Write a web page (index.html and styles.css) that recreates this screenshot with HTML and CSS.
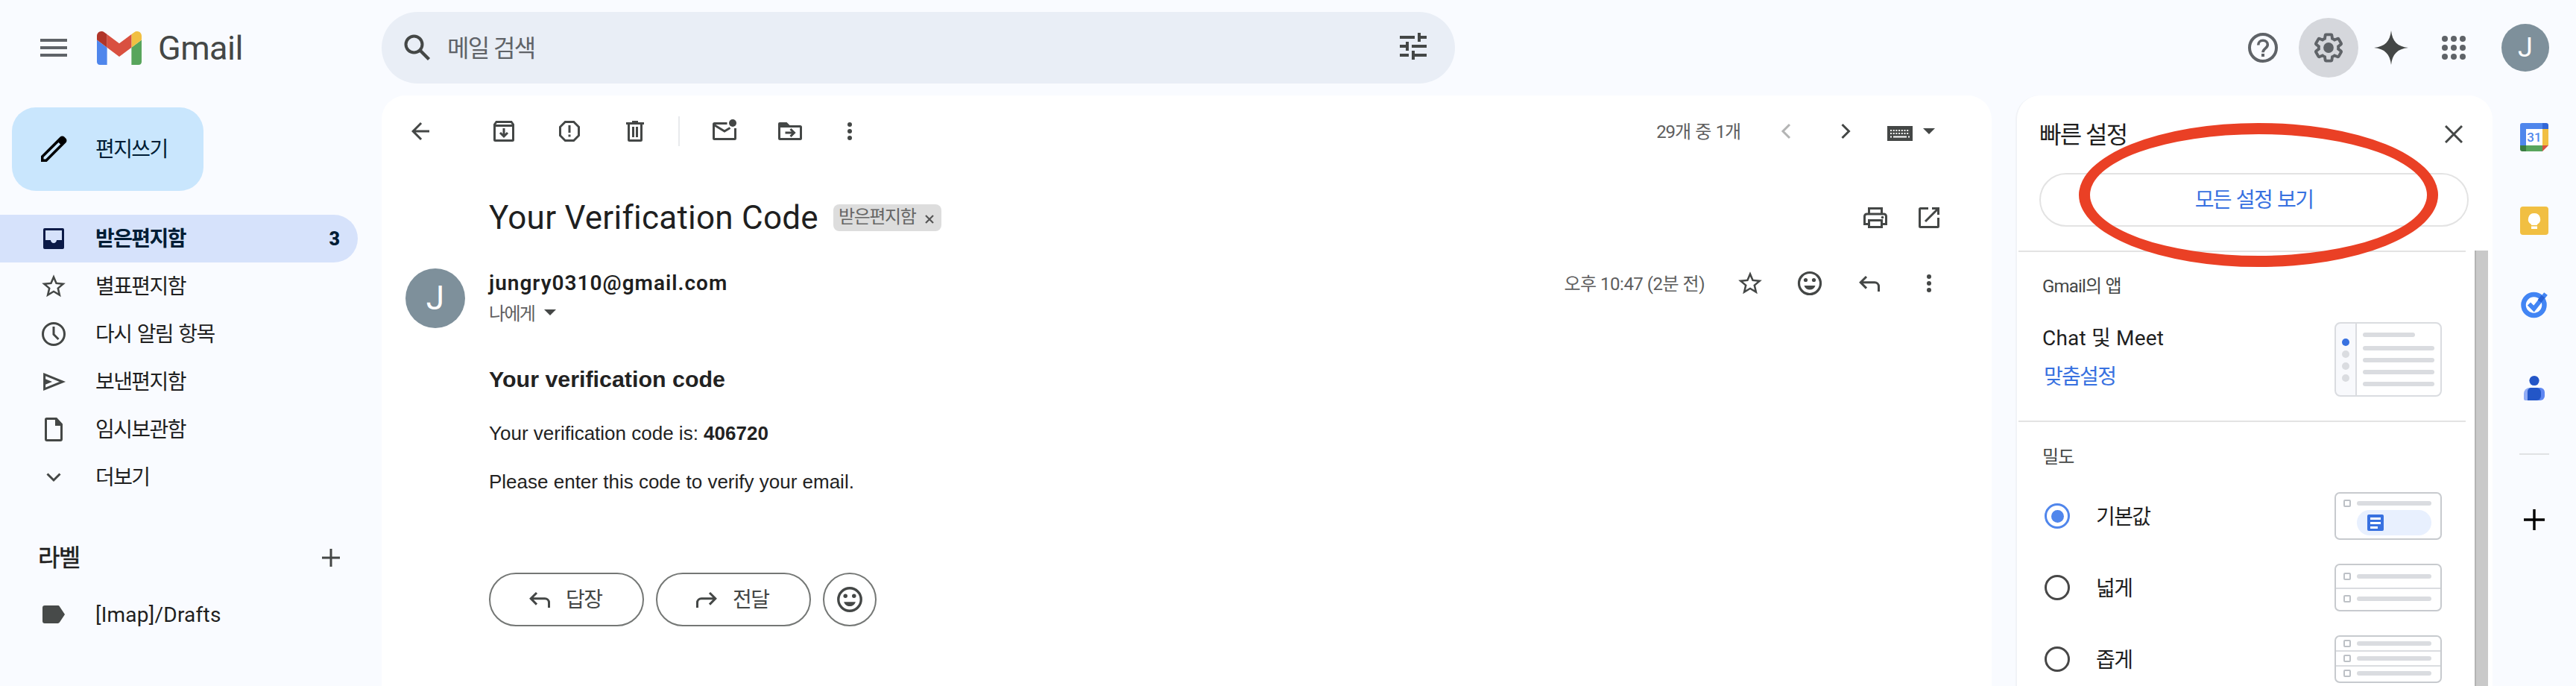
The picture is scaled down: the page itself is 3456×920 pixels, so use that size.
FILE: index.html
```html
<!DOCTYPE html>
<html lang="ko">
<head>
  <meta charset="UTF-8">
  <meta name="viewport" content="width=device-width, initial-scale=1.0">
  <title>Gmail</title>
  <link rel="stylesheet" href="styles.css">
</head>
<body>
  <svg class="sprite" aria-hidden="true">
    <symbol id="dots" viewBox="0 0 40 40"><g fill="currentColor"><circle cx="20" cy="11" r="3"/><circle cx="20" cy="20" r="3"/><circle cx="20" cy="29" r="3"/></g></symbol>
    <symbol id="star" viewBox="0 0 24 24"><path fill="currentColor" d="M22 9.24l-7.19-.62L12 2 9.19 8.63 2 9.24l5.46 4.73L5.82 21 12 17.27 18.18 21l-1.63-7.03L22 9.24zM12 15.4l-3.76 2.27 1-4.28-3.32-2.88 4.38-.38L12 6.1l1.71 4.04 4.38.38-3.32 2.88 1 4.28L12 15.4z"/></symbol>
    <symbol id="smile" viewBox="0 0 40 40"><circle cx="20" cy="20" r="14.5" fill="none" stroke="currentColor" stroke-width="3.2"/><g fill="currentColor"><circle cx="14.5" cy="15.5" r="2.6"/><circle cx="25.5" cy="15.5" r="2.6"/><path d="M12.5 23h15c-1.2 3.600-4 5.600-7.500 5.600s-6.300-2-7.500-5.600z"/></g></symbol>
    <symbol id="reply" viewBox="0 0 40 40"><path class="line" d="M16 11l-7.800 7.800 7.800 7.800M8.500 18.800H27a5.500 5.500 0 0 1 5.500 5.500V31"/></symbol>
  </svg>

  <header class="header">
    <div class="brand">
      <svg class="menu" viewBox="0 0 36 24"><path fill="#5f6368" d="M0 0h36v4H0zM0 10h36v4H0zM0 20h36v4H0z"/></svg>
      <svg class="logo" viewBox="52 42 88 66">
        <path fill="#4f86ec" d="M58 108h14V74L52 59v43c0 3.320 2.690 6 6 6"/>
        <path fill="#58a55c" d="M120 108h14c3.320 0 6-2.690 6-6V59l-20 15"/>
        <path fill="#f1bf42" d="M120 48v26l20-15v-8c0-7.420-8.470-11.650-14.400-7.200"/>
        <path fill="#d95040" d="M72 74V48l24 18 24-18v26L96 92"/>
        <path fill="#b13529" d="M52 51v8l20 15V48l-5.600-4.200c-5.940-4.450-14.400-.22-14.400 7.200"/>
      </svg>
      <span class="brand-name">Gmail</span>
    </div>
    <div class="search">
      <svg class="icon-search" viewBox="0 0 36 36"><circle cx="13.500" cy="13.500" r="11" fill="none" stroke="currentColor" stroke-width="4"/><path d="M21.500 21.500L33.500 33.500" stroke="currentColor" stroke-width="4.400"/></svg>
      <span>메일 검색</span>
      <svg class="icon-tune" viewBox="0 0 36 36"><path fill="currentColor" d="M0 4h20v4H0zM24 0h4v4h8v4h-8v4h-4zM0 16h8v-4h4v12H8v-4H0zM16 16h20v4H16zM0 28h12v4H0zM16 24h4v4h16v4H20v4h-4z"/></svg>
    </div>
    <div class="header-actions">
      <div class="round"><svg width="40" height="40" viewBox="0 0 40 40"><circle cx="20" cy="20" r="18" fill="none" stroke="#5f6368" stroke-width="4"/><path d="M13.700 16.500c0-3.700 2.700-6.200 6.300-6.200s6.300 2.400 6.300 5.700c0 4.800-6.300 4.900-6.300 10.200" fill="none" stroke="#5f6368" stroke-width="3.600"/><path fill="#5f6368" d="M18 28h4v4h-4z"/></svg></div>
      <div class="round round-on"><svg width="46" height="46" viewBox="0 0 24 24"><path fill="none" stroke="#5f6368" stroke-width="2.200" transform="translate(1 1) scale(.917)" d="M19.430 12.980c.04-.32.07-.64.07-.98 0-.34-.03-.66-.07-.98l2.110-1.650c.19-.15.24-.42.12-.64l-2-3.460c-.09-.16-.26-.25-.44-.25-.06 0-.12.01-.17.03l-2.490 1c-.52-.4-1.080-.73-1.690-.98l-.38-2.650C14.460 2.180 14.250 2 14 2h-4c-.25 0-.46.18-.49.42l-.38 2.650c-.61.25-1.170.59-1.690.98l-2.490-1c-.06-.02-.12-.03-.18-.03-.17 0-.34.09-.43.25l-2 3.460c-.13.22-.07.49.12.64l2.110 1.650c-.04.32-.07.65-.07.98 0 .33.03.66.07.98l-2.110 1.650c-.19.15-.24.42-.12.64l2 3.460c.09.16.26.25.44.25.06 0 .12-.01.17-.03l2.490-1c.52.4 1.080.73 1.690.98l.38 2.650c.03.24.24.42.49.42h4c.25 0 .46-.18.49-.42l.38-2.650c.61-.25 1.170-.59 1.690-.98l2.490 1c.06.02.12.03.18.03.17 0 .34-.09.43-.25l2-3.460c.12-.22.07-.49-.12-.64l-2.110-1.650z"/><circle cx="12" cy="12" r="3.600" fill="#5f6368"/></svg></div>
      <div class="round"><svg width="46" height="46" viewBox="0 0 46 46"><path fill="#444746" d="M23 0c1.500 14.500 8.500 21.500 23 23-14.500 1.500-21.500 8.500-23 23-1.500-14.500-8.500-21.500-23-23 14.500-1.500 21.500-8.500 23-23z"/></svg></div>
      <div class="round"><svg width="32" height="32" viewBox="0 0 32 32"><g fill="#5f6368"><circle cx="4" cy="4" r="4"/><circle cx="16" cy="4" r="4"/><circle cx="28" cy="4" r="4"/><circle cx="4" cy="16" r="4"/><circle cx="16" cy="16" r="4"/><circle cx="28" cy="16" r="4"/><circle cx="4" cy="28" r="4"/><circle cx="16" cy="28" r="4"/><circle cx="28" cy="28" r="4"/></g></svg></div>
      <div class="avatar avatar-small">J</div>
    </div>
  </header>

  <div class="content">
    <nav class="sidebar">
      <div class="compose">
        <svg width="38" height="38" viewBox="0 0 38 38"><path d="M2 28.300L27.500 2.800a4.200 4.200 0 0 1 6 0l1.700 1.700a4.200 4.200 0 0 1 0 6L9.700 36H2z" fill="#000"/><path d="M5.500 32.500v-2.800L25.500 10l2.600 2.600L8.200 32.500z" fill="#c9e6fd"/></svg>
        <span>편지쓰기</span>
      </div>
      <div class="nav-item active">
        <svg viewBox="0 0 40 40"><path fill="#0b1a47" fill-rule="evenodd" d="M8 6h24a2 2 0 0 1 2 2v24a2 2 0 0 1-2 2H8a2 2 0 0 1-2-2V8a2 2 0 0 1 2-2zM9 9v13h7c0 2.200 1.800 4 4 4s4-1.800 4-4h7V9z"/></svg>
        <span>받은편지함</span><b class="count">3</b>
      </div>
      <div class="nav-item"><svg class="nav-star"><use href="#star"/></svg><span>별표편지함</span></div>
      <div class="nav-item"><svg viewBox="0 0 40 40"><circle class="line" cx="20" cy="20" r="14.500"/><path class="line" d="M20 10v10.500l6.500 6.500"/></svg><span>다시 알림 항목</span></div>
      <div class="nav-item"><svg viewBox="0 0 40 40"><path class="line" d="M7.600 10.200L32 20 7.600 29.800z"/><path fill="#444746" d="M7 15.500L18 20 7 24.500z"/></svg><span>보낸편지함</span></div>
      <div class="nav-item"><svg viewBox="0 0 40 40"><path class="line" d="M10.500 5.500h13l7 7.500v20a1.500 1.500 0 0 1-1.500 1.500H11a1.500 1.500 0 0 1-1.500-1.500V6.500a1 1 0 0 1 1-1z"/><path fill="#444746" d="M22 5v10h10l-8-10z"/></svg><span>임시보관함</span></div>
      <div class="nav-item"><svg viewBox="0 0 40 40"><path class="line" d="M11.500 15.500l8.500 8.500 8.500-8.500"/></svg><span>더보기</span></div>
      <div class="labels-head"><span>라벨</span><svg width="24" height="24" viewBox="0 0 24 24"><path class="line" d="M12 0v24M0 12h24"/></svg></div>
      <div class="nav-item label-row"><svg viewBox="0 0 40 40"><path fill="#474a49" d="M8 8h17.500c1 0 2 .5 2.500 1.400L35 20l-7 10.600c-.5.900-1.500 1.400-2.500 1.400H8a3 3 0 0 1-3-3V11a3 3 0 0 1 3-3z"/></svg><span>[Imap]/Drafts</span></div>
    </nav>

    <main class="mail">
      <div class="toolbar">
        <div class="tool back"><svg class="icon36" viewBox="0 0 24 24"><path fill="currentColor" d="M20 11H7.830l5.590-5.590L12 4l-8 8 8 8 1.410-1.410L7.830 13H20v-2z"/></svg></div>
        <div class="tool"><svg viewBox="0 0 40 40"><path class="line" d="M10 7.500h20l2.500 3.500v20.500a1 1 0 0 1-1 1h-23a1 1 0 0 1-1-1V11zM7.500 12.500h25M20 16v10M15 22l5 5 5-5"/></svg></div>
        <div class="tool"><svg viewBox="0 0 40 40"><path class="line" d="M14.300 7.500h11.400l6.800 6.800v11.400l-6.800 6.800H14.300l-6.800-6.800V14.300zM20 12v10M20 24.500v3"/></svg></div>
        <div class="tool"><svg viewBox="0 0 40 40"><path class="line" d="M8 9.500h24M16 7.500h8M11.500 10v21.500a1 1 0 0 0 1 1h15a1 1 0 0 0 1-1V10M17.500 14v14M22.500 14v14"/></svg></div>
        <div class="tool-divider"></div>
        <div class="tool"><svg viewBox="0 0 40 40"><path class="line" d="M23.500 9.500h-17a1 1 0 0 0-1 1v19a1 1 0 0 0 1 1h27a1 1 0 0 0 1-1V16M6 11.500l14 8.500 7.500-4.500"/><circle cx="31" cy="9" r="5" fill="currentColor"/></svg></div>
        <div class="tool"><svg viewBox="0 0 40 40"><path class="line" d="M5.500 11v18.500a1 1 0 0 0 1 1h27a1 1 0 0 0 1-1v-15a1 1 0 0 0-1-1H6M13.500 22h11M20.500 17l5 5-5 5"/><path fill="currentColor" d="M4 14v-4a2 2 0 0 1 2-2h9.500l4 4v2z"/></svg></div>
        <div class="tool more"><svg><use href="#dots"/></svg></div>
        <span class="pager">29개 중 1개</span>
        <div class="tool page"><svg class="dim" viewBox="0 0 40 40"><path class="line" d="M25 11l-9 9 9 9"/></svg></div>
        <div class="tool page"><svg viewBox="0 0 40 40"><path class="line" d="M15.500 11l9 9-9 9"/></svg></div>
        <svg class="keyboard" viewBox="0 0 34 20"><path fill="#444746" d="M0 0h34v20H0z"/><path stroke="#fff" stroke-width="2" stroke-dasharray="2 1.700" d="M4 6h26M4 10h26"/><path stroke="#fff" stroke-width="2" d="M4 14.500h2M8 14.500h18M28 14.500h2"/></svg>
        <i class="caret"></i>
      </div>

      <div class="subject">
        <h1>Your Verification Code</h1>
        <div class="badge"><span>받은편지함</span><svg width="12" height="12" viewBox="0 0 12 12"><path d="M1 1l10 10M11 1L1 11" stroke="#555" stroke-width="2.200"/></svg></div>
        <div class="subject-actions">
          <svg viewBox="0 0 40 40"><path class="line" d="M11.500 15V7.500h17V15M11.500 28.500h-6V18a3 3 0 0 1 3-3h23a3 3 0 0 1 3 3v10.500h-6M11.500 23.500h17v9h-17z"/><circle cx="29.500" cy="19.500" r="1.800" fill="currentColor"/></svg>
          <svg viewBox="0 0 40 40"><path class="line" d="M19 7.500H8.500a1 1 0 0 0-1 1v23a1 1 0 0 0 1 1h23a1 1 0 0 0 1-1V20M24 7.500h8.500V16M32 8L15 25"/></svg>
        </div>
      </div>

      <div class="sender">
        <div class="avatar">J</div>
        <div class="sender-info">
          <div class="sender-mail">jungry0310@gmail.com</div>
          <div class="sender-to">나에게<i class="caret"></i></div>
        </div>
        <div class="sender-actions">
          <span class="date">오후 10:47 (2분 전)</span>
          <div class="tool"><svg class="icon38"><use href="#star"/></svg></div>
          <div class="tool"><svg><use href="#smile"/></svg></div>
          <div class="tool"><svg><use href="#reply"/></svg></div>
          <div class="tool"><svg><use href="#dots"/></svg></div>
        </div>
      </div>

      <div class="message">
        <h3>Your verification code</h3>
        <p>Your verification code is: <b>406720</b></p>
        <p>Please enter this code to verify your email.</p>
      </div>

      <div class="reply-row">
        <div class="pill"><svg><use href="#reply"/></svg><span>답장</span></div>
        <div class="pill"><svg class="flip"><use href="#reply"/></svg><span>전달</span></div>
        <div class="pill pill-round"><svg class="icon42"><use href="#smile"/></svg></div>
      </div>
    </main>

    <aside class="settings">
      <div class="settings-top">
        <div class="settings-title"><span>빠른 설정</span><svg width="24" height="24" viewBox="0 0 24 24"><path class="line" d="M1 1l22 22M23 1L1 23"/></svg></div>
        <div class="all-settings">모든 설정 보기</div>
        <div class="marker"></div>
      </div>
      <div class="settings-scroll">
        <section class="apps">
          <h4>Gmail의 앱</h4>
          <div class="apps-row">
            <div>
              <div class="apps-name">Chat 및 Meet</div>
              <div class="apps-link">맞춤설정</div>
            </div>
            <svg class="apps-preview" width="144" height="100" viewBox="0 0 144 100">
              <path fill="#f8f9fc" d="M6 1h23v98H6a5 5 0 0 1-5-5V6a5 5 0 0 1 5-5z"/>
              <rect x="1" y="1" width="142" height="98" rx="7" fill="none" stroke="#dadce0" stroke-width="2"/>
              <path stroke="#dadce0" stroke-width="2" d="M29 1v98"/>
              <circle cx="15" cy="27" r="5" fill="#3871e0"/>
              <g fill="#dadce0"><circle cx="15" cy="43" r="5"/><circle cx="15" cy="59" r="5"/><circle cx="15" cy="75" r="5"/>
              <rect x="38" y="14" width="70" height="6" rx="3"/><rect x="38" y="32" width="96" height="6" rx="3"/><rect x="38" y="48" width="96" height="6" rx="3"/><rect x="38" y="64" width="96" height="6" rx="3"/><rect x="38" y="80" width="96" height="6" rx="3"/></g>
            </svg>
          </div>
        </section>
        <section class="density">
          <h4>밀도</h4>
          <div class="option">
            <i class="radio checked"></i><span>기본값</span>
            <svg width="144" height="64" viewBox="0 0 144 64">
              <rect class="frame" x="1" y="1" width="142" height="62" rx="6"/>
              <rect class="box" x="13" y="11" width="8" height="8" rx="1"/><rect class="bar" x="30" y="12" width="100" height="6" rx="3"/>
              <rect x="30" y="24" width="100" height="34" rx="17" fill="#e8f0fe"/>
              <rect x="44" y="30" width="22" height="22" rx="2" fill="#3871e0"/><path stroke="#fff" stroke-width="3" d="M48 35.500h14M48 41.500h14M48 47.500h10"/>
            </svg>
          </div>
          <div class="option">
            <i class="radio"></i><span>넓게</span>
            <svg width="144" height="64" viewBox="0 0 144 64">
              <path stroke="#dadce0" stroke-width="2" d="M1 33h142"/><rect class="frame" x="1" y="1" width="142" height="62" rx="6"/>
              <rect class="box" x="13" y="13" width="8" height="8" rx="1"/><rect class="bar" x="30" y="14" width="100" height="6" rx="3"/>
              <rect class="box" x="13" y="43" width="8" height="8" rx="1"/><rect class="bar" x="30" y="44" width="100" height="6" rx="3"/>
            </svg>
          </div>
          <div class="option">
            <i class="radio"></i><span>좁게</span>
            <svg width="144" height="64" viewBox="0 0 144 64">
              <path stroke="#dadce0" stroke-width="2" d="M1 21h142M1 41h142"/><rect class="frame" x="1" y="1" width="142" height="62" rx="6"/>
              <rect class="box" x="13" y="7" width="8" height="8" rx="1"/><rect class="bar" x="30" y="8" width="100" height="6" rx="3"/>
              <rect class="box" x="13" y="27" width="8" height="8" rx="1"/><rect class="bar" x="30" y="28" width="100" height="6" rx="3"/>
              <rect class="box" x="13" y="47" width="8" height="8" rx="1"/><rect class="bar" x="30" y="48" width="100" height="6" rx="3"/>
            </svg>
          </div>
        </section>
        <div class="scrollbar"></div>
      </div>
    </aside>

    <aside class="side-apps">
      <svg width="38" height="38" viewBox="0 0 38 38">
        <path fill="#4f86ec" d="M3 0h27v8H8v22H0V3a3 3 0 0 1 3-3z"/><path fill="#3367d6" d="M30 0h5a3 3 0 0 1 3 3v5h-8z"/>
        <path fill="#f1bf42" d="M30 8h8v22h-8z"/><path fill="#58a55c" d="M8 30h22v8H8z"/><path fill="#3a7d42" d="M0 30h8v8H3a3 3 0 0 1-3-3z"/><path fill="#d95040" d="M30 30h8l-8 8z"/>
        <path fill="#fff" d="M8 8h22v22H8z"/><text class="cal-day" x="19" y="25" text-anchor="middle">31</text>
      </svg>
      <svg width="38" height="38" viewBox="0 0 38 38">
        <rect width="38" height="38" rx="4" fill="#f1bf42"/><path fill="#fff" d="M19 9a8 8 0 0 1 4 15v1h-8v-1a8 8 0 0 1 4-15zM15 26.500h8V30h-8z"/>
      </svg>
      <svg width="38" height="38" viewBox="0 0 38 38">
        <circle cx="18.500" cy="20" r="14" fill="#fff" stroke="#4285f4" stroke-width="6.500"/>
        <path d="M12 18.500l6.500 6.500L34.500 5" fill="none" stroke="#4285f4" stroke-width="6"/><path d="M26 15l5-6.500" stroke="#2a63d6" stroke-width="6"/>
      </svg>
      <svg width="38" height="38" viewBox="0 0 38 38">
        <circle cx="19" cy="9.500" r="6.600" fill="#2356c7"/><path fill="#8fabf5" d="M13 19h12v17H7a2 2 0 0 1-2-2v-7a8 8 0 0 1 8-8z"/>
        <path fill="#5e87f2" d="M19 19h8a6 6 0 0 1 6 6v5a6 6 0 0 1-6 6h-8z"/><path fill="#2356c7" d="M15 19h7a6 6 0 0 1 6 6v5a6 6 0 0 1-6 6H10V24a5 5 0 0 1 5-5z"/>
      </svg>
      <div class="side-divider"></div>
      <svg class="side-plus" width="28" height="28" viewBox="0 0 28 28"><path stroke="#000" stroke-width="3.400" d="M14 0v28M0 14h28"/></svg>
    </aside>
  </div>
</body>
</html>
```

FILE: styles.css
```css
* {
  margin: 0;
  padding: 0;
  box-sizing: border-box;
}

body {
  width: 3456px;
  height: 920px;
  overflow: hidden;
  background: #f9fbff;
  color: #1f1f1f;
  font-family: Roboto, "Noto Sans CJK KR", sans-serif;
  font-size: 28px;
  white-space: nowrap;
}

svg {
  display: block;
  flex: none;
}

.sprite {
  position: absolute;
  width: 0;
  height: 0;
}

.line {
  fill: none;
  stroke: #444746;
  stroke-width: 3;
}

/* Header */
.header {
  display: flex;
  height: 128px;
}

.brand {
  width: 512px;
  height: 128px;
  padding-left: 54px;
  display: flex;
  align-items: center;
}

.menu {
  width: 36px;
  height: 24px;
  margin-right: 40px;
}

.logo {
  width: 60px;
  height: 45px;
  margin-right: 22px;
}

.brand-name {
  font-size: 45px;
  letter-spacing: -0.5px;
  color: #444746;
}

.search {
  width: 1440px;
  height: 96px;
  margin-top: 16px;
  padding: 0 38px 0 30px;
  border-radius: 48px;
  background: #e9eef6;
  color: #444746;
  display: flex;
  align-items: center;
}

.search span {
  flex: 1;
  margin: -5px 0 0 22px;
  font-size: 32px;
  letter-spacing: -1.6px;
  color: #5f6368;
}

.icon-search,
.icon-tune {
  width: 36px;
  height: 36px;
}

.icon-tune {
  margin-top: -4px;
}

.header-actions {
  flex: 1;
  display: flex;
  align-items: center;
  justify-content: flex-end;
  padding-right: 36px;
}

.round {
  width: 80px;
  height: 80px;
  margin-right: 4px;
  border-radius: 50%;
  display: flex;
  align-items: center;
  justify-content: center;
}

.round-on {
  background: #d5d7dc;
}

.round:nth-child(1) {
  margin-right: 8px;
}

.avatar {
  width: 80px;
  height: 80px;
  border-radius: 50%;
  background: #7e909b;
  color: #fff;
  font-size: 44px;
  display: flex;
  align-items: center;
  justify-content: center;
  flex: none;
}

.avatar-small {
  width: 64px;
  height: 64px;
  margin-left: 20px;
  font-size: 36px;
}

/* Columns */
.content {
  display: flex;
  height: 792px;
}

.sidebar {
  width: 512px;
  padding-top: 16px;
}

.compose {
  width: 257px;
  height: 112px;
  margin-left: 16px;
  padding-left: 37px;
  border-radius: 32px;
  background: #c9e6fd;
  color: #001d35;
  display: flex;
  align-items: center;
  letter-spacing: -1.6px;
}

.compose span {
  margin: -5px 0 0 37px;
}

.nav-item {
  width: 480px;
  height: 64px;
  padding: 0 24px 0 52px;
  display: flex;
  align-items: center;
}

.nav-item svg {
  width: 40px;
  height: 40px;
}

.nav-item .nav-star {
  width: 38px;
  height: 38px;
  margin: 0 1px;
  color: #444746;
}

.nav-item span {
  margin: -5px 0 0 36px;
  letter-spacing: -1.6px;
  word-spacing: 2px;
}

.active {
  margin-top: 32px;
  border-radius: 0 32px 32px 0;
  background: #d6e2fb;
  color: #001d35;
  font-weight: 700;
}

.count {
  margin-left: auto;
  font-size: 25px;
}

.labels-head {
  width: 456px;
  height: 72px;
  margin: 40px 0 0 51px;
  padding-right: 51px;
  display: flex;
  align-items: center;
  justify-content: space-between;
  font-size: 32px;
  letter-spacing: -1.8px;
}

.labels-head span {
  margin-top: -6px;
  -webkit-text-stroke: 0.5px #1f1f1f;
}

.label-row {
  margin-top: 8px;
}

.nav-item.label-row span {
  margin-top: 0;
  letter-spacing: 0.25px;
}

.mail {
  width: 2160px;
  border-radius: 32px 32px 0 0;
  background: #fff;
  color: #444746;
}

.toolbar {
  height: 96px;
  padding: 0 76px 0 8px;
  display: flex;
  align-items: center;
}

.tool {
  width: 88px;
  display: flex;
  justify-content: center;
}

.tool svg {
  width: 40px;
  height: 40px;
}

.tool svg.icon36 {
  width: 36px;
  height: 36px;
}

.tool svg.icon38 {
  width: 38px;
  height: 38px;
}

.back {
  margin-right: 24px;
}

.tool-divider {
  width: 2px;
  height: 40px;
  margin: 0 16px 0 14px;
  background: #e8eaed;
}

.toolbar .more {
  width: 72px;
}

.pager {
  margin: -4px 0 0 auto;
  font-size: 24px;
  letter-spacing: -1.1px;
  word-spacing: 1.5px;
  color: #5e5e5e;
}

.toolbar .page {
  width: 80px;
}

.pager + .page {
  margin-left: 21px;
}

.dim {
  opacity: 0.4;
}

.keyboard {
  width: 34px;
  height: 20px;
  margin: 6px 14px 0 16px;
}

.caret {
  display: inline-block;
  border: 8px solid transparent;
  border-top-color: #444746;
  border-bottom: 0;
}

.subject {
  height: 136px;
  padding: 0 64px 0 144px;
  display: flex;
  align-items: center;
}

.subject h1 {
  width: 462px;
  font-size: 44px;
  font-weight: 400;
  letter-spacing: 0.25px;
  color: #1f1f1f;
}

.badge {
  width: 145px;
  height: 36px;
  padding: 0 10px 0 7px;
  border-radius: 8px;
  background: #ddd;
  color: #666;
  font-size: 24px;
  line-height: 34px;
  letter-spacing: -1.4px;
  display: flex;
  align-items: center;
  justify-content: space-between;
}

.badge span {
  margin-top: -2px;
}

.badge svg {
  margin-top: 3px;
}

.subject-actions {
  margin-left: auto;
  display: flex;
  gap: 32px;
}

.subject-actions svg {
  width: 40px;
  height: 40px;
}

.sender {
  height: 80px;
  padding-left: 32px;
  display: flex;
}

.sender-info {
  margin-left: 32px;
}

.sender-mail {
  height: 40px;
  line-height: 40px;
  font-weight: 600;
  letter-spacing: 1px;
  color: #1f1f1f;
}

.sender-to {
  height: 36px;
  display: flex;
  align-items: center;
  gap: 13px;
  font-size: 24px;
  letter-spacing: -1.7px;
  color: #5e5e5e;
}

.sender-to .caret {
  margin-top: 2px;
}

.sender-actions {
  height: 40px;
  margin: 0 44px 0 auto;
  display: flex;
  align-items: center;
}

.sender-actions .tool {
  width: 80px;
}

.date {
  margin: -4px 21px 0 0;
  font-size: 24px;
  letter-spacing: -0.5px;
  color: #5e5e5e;
}

/* Message body */
.message {
  padding: 50px 0 0 144px;
  font-family: "Liberation Sans", sans-serif;
  font-size: 26px;
  color: #222;
}

.message h3 {
  margin-bottom: 37px;
  font-size: 30.4px;
  line-height: 36px;
}

.message p {
  height: 65px;
  line-height: 36px;
}

.reply-row {
  margin: 16px 0 0 144px;
  padding-top: 59px;
  display: flex;
  gap: 16px;
  color: #444746;
}

.pill {
  width: 208px;
  height: 72px;
  border: 2px solid #747775;
  border-radius: 36px;
  display: flex;
  align-items: center;
  padding-left: 46px;
}

.pill svg {
  width: 40px;
  height: 40px;
}

.pill span {
  margin: -5px 0 0 15px;
  letter-spacing: -1.6px;
}

.flip {
  transform: scaleX(-1);
}

.pill-round {
  width: 72px;
  padding: 0;
  justify-content: center;
}

.pill svg.icon42 {
  width: 42px;
  height: 42px;
}

/* Quick settings */
.settings {
  width: 640px;
  margin-left: 32px;
  border-left: 2px solid #f1f3f7;
  border-radius: 32px 32px 0 0;
  background: #fff;
}

.settings-top {
  position: relative;
  height: 208px;
  padding: 26px 32px 0 30px;
}

.settings-title {
  height: 52px;
  padding-right: 8px;
  display: flex;
  align-items: center;
  justify-content: space-between;
  font-size: 32px;
  letter-spacing: -1.6px;
}

.settings-title span {
  margin-top: -5px;
}

.all-settings {
  height: 72px;
  margin-top: 26px;
  border: 2px solid #e3e3e3;
  border-radius: 36px;
  text-align: center;
  line-height: 70px;
  letter-spacing: -1.6px;
  word-spacing: 1.5px;
  color: #3871e0;
}

/* red ring drawn over the button */
.marker {
  position: absolute;
  left: 83px;
  top: 37px;
  width: 482px;
  height: 193px;
  border: 15px solid #ea4025;
  border-radius: 50%;
  z-index: 1;
}

.settings-scroll {
  position: relative;
  height: 584px;
  overflow: hidden;
}

.scrollbar {
  position: absolute;
  top: 0;
  right: 6px;
  width: 18px;
  height: 584px;
  border-left: 2px solid #b3b3b3;
  background: #c9c9c9;
}

.apps,
.density {
  width: 600px;
  margin-left: 2px;
  padding-left: 32px;
  border-top: 2px solid #e3e3e3;
}

.apps {
  height: 228px;
}

.settings h4 {
  height: 92px;
  line-height: 93px;
  font-size: 24px;
  font-weight: 400;
  letter-spacing: -0.8px;
  color: #444746;
}

.apps-row {
  display: flex;
  justify-content: space-between;
  margin-right: 32px;
}

.apps-preview {
  margin-top: 2px;
}

.apps-name {
  height: 50px;
  margin-top: 2px;
  line-height: 43px;
  letter-spacing: 0.2px;
}

.apps-link {
  padding-left: 2px;
  line-height: 48px;
  letter-spacing: -1.7px;
  color: #3871e0;
}

.density h4 {
  height: 94px;
  line-height: 94px;
}

.option {
  height: 64px;
  margin: 0 32px 32px 0;
  padding-left: 3px;
  display: flex;
  align-items: center;
}

.option span {
  flex: 1;
  margin: -3px 0 0 35px;
  letter-spacing: -1.6px;
}

.radio {
  width: 34px;
  height: 34px;
  border: 3px solid #474747;
  border-radius: 50%;
}

.checked {
  border-color: #5086ec;
  padding: 5.5px;
  background: #5086ec content-box;
}

.frame {
  fill: none;
  stroke: #c7cace;
  stroke-width: 2;
}

.box {
  fill: none;
  stroke: #bdc1c6;
  stroke-width: 2;
}

.bar {
  fill: #dadce0;
}

/* Side panel icons */
.side-apps {
  width: 112px;
  padding-top: 37px;
  display: flex;
  flex-direction: column;
  align-items: center;
  gap: 74px;
}

.cal-day {
  font-size: 17px;
  font-weight: 500;
  fill: #4f86ec;
}

.side-divider {
  width: 40px;
  height: 2px;
  margin-top: -5px;
  background: #e0e2e4;
}

.side-plus {
  margin-top: -1px;
}
```
